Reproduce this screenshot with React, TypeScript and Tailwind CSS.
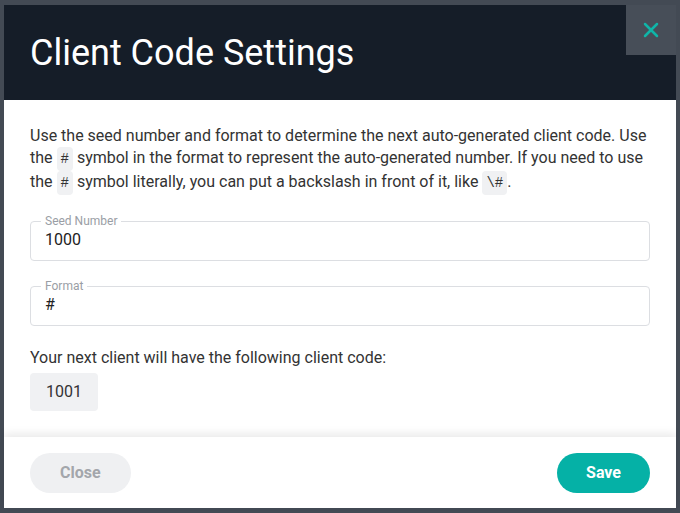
import { X } from 'lucide-react'

function Chip({ children }: { children: React.ReactNode }) {
  return (
    <span className="rounded-[4px] bg-[#f0f1f3] px-[4px] py-[4px] font-['Liberation_Mono',monospace] text-[14px] text-[#333]">
      {children}
    </span>
  )
}

function OutlinedField({ label, value }: { label: string; value: string }) {
  return (
    <div className="relative h-[40px] rounded-[4px] border border-[#dcdee2] px-[14px] pt-[6px]">
      <span className="absolute -top-[8px] left-[10px] bg-white px-[4px] text-[12px] leading-[14px] text-[#9a9ea5]">
        {label}
      </span>
      <div className="text-[16px] leading-[24px] text-[#222]">{value}</div>
    </div>
  )
}

export default function App() {
  return (
    <div className="h-[513px] w-[680px] overflow-hidden bg-[#434a54] pl-[4px] pt-[5px] font-['Roboto',sans-serif]">
      <div className="relative flex h-[503px] w-[672px] flex-col bg-white">
        <header className="flex h-[95px] shrink-0 items-center bg-[#151d28] px-[26px]">
          <h1 className="text-[36px] font-normal leading-[42px] text-white">Client Code Settings</h1>
        </header>

        <button className="absolute right-0 top-0 flex h-[50px] w-[50px] items-center justify-center bg-[#474e58] text-[#10b5a8]">
          <X size={24} strokeWidth={2.5} />
        </button>

        <div className="flex-1 px-[26px] pt-[25px]">
          <p className="text-[16px] leading-[22.4px] text-[#333]">
            Use the seed number and format to determine the next auto-generated client code. Use the <Chip>#</Chip>{' '}
            symbol in the format to represent the auto-generated number. If you need to use the <Chip>#</Chip> symbol
            literally, you can put a backslash in front of it, like <Chip>\#</Chip>.
          </p>

          <div className="mt-[27px] flex flex-col gap-[25px]">
            <OutlinedField label="Seed Number" value="1000" />
            <OutlinedField label="Format" value="#" />
          </div>

          <p className="mt-[20px] text-[16px] leading-[24px] text-[#333]">
            Your next client will have the following client code:
          </p>
          <div className="mt-[3px] flex h-[38px] w-fit items-center rounded-[4px] bg-[#f0f1f3] px-[16px] text-[16px] text-[#333]">
            1001
          </div>
        </div>

        <footer className="relative flex h-[71px] shrink-0 items-start justify-between bg-white px-[26px] pt-[16px] shadow-[0_-4px_8px_rgba(0,0,0,0.08)]">
          <button className="h-[40px] rounded-full bg-[#eff0f2] px-[30px] text-[16px] font-bold text-[#a3a6ab]">
            Close
          </button>
          <button className="h-[40px] rounded-full bg-[#05b1a6] px-[29px] text-[16px] font-bold text-white">
            Save
          </button>
        </footer>
      </div>
    </div>
  )
}
